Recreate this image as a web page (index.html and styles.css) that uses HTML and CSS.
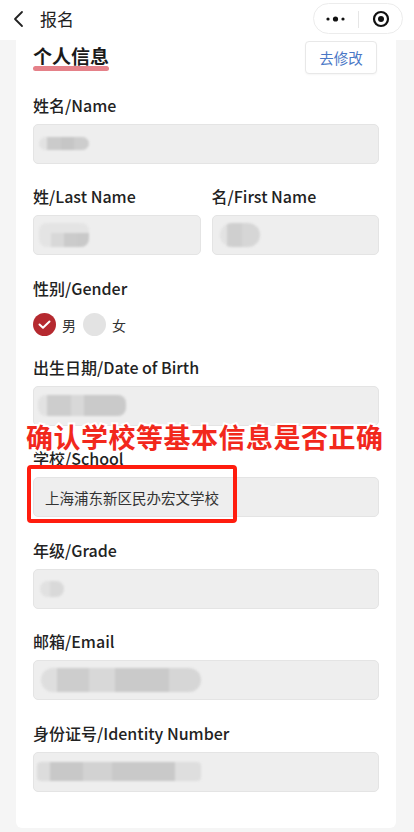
FILE: index.html
```html
<!DOCTYPE html>
<html lang="zh-CN">
<head>
<meta charset="utf-8">
<title>报名</title>
<link rel="stylesheet" href="styles.css">
</head>
<body>
<header class="topbar">
  <svg class="back" width="24" height="24" viewBox="0 0 24 24"><polyline points="15,5 8,12 15,19" fill="none" stroke="#222" stroke-width="1.8" stroke-linecap="round" stroke-linejoin="round"/></svg>
  <span class="page-title">报名</span>
  <div class="capsule">
    <svg width="88" height="29" viewBox="0 0 88 29">
      <circle cx="14" cy="15" r="1.6" fill="#111"/>
      <circle cx="21.5" cy="15" r="2.6" fill="#111"/>
      <circle cx="29" cy="15" r="1.6" fill="#111"/>
      <line x1="44.5" y1="7" x2="44.5" y2="24" stroke="#e6e6e6" stroke-width="1"/>
      <circle cx="67" cy="15" r="7" fill="none" stroke="#111" stroke-width="2.2"/>
      <circle cx="67" cy="15" r="3" fill="#111"/>
    </svg>
  </div>
</header>

<main class="card">
  <div class="card-head">
    <h2 class="section-title">个人信息</h2>
    <button class="edit-btn">去修改</button>
  </div>

  <div class="field">
    <div class="label">姓名/Name</div>
    <div class="input"><span class="mosaic m-name"></span></div>
  </div>

  <div class="field row">
    <div class="col">
      <div class="label">姓/Last Name</div>
      <div class="input"><span class="mosaic m-last"></span></div>
    </div>
    <div class="col">
      <div class="label">名/First Name</div>
      <div class="input"><span class="mosaic m-first"></span></div>
    </div>
  </div>

  <div class="field">
    <div class="label">性别/Gender</div>
    <div class="radios">
      <span class="radio checked">
        <svg width="23" height="23" viewBox="0 0 23 23"><polyline points="6.5,11.5 10,14.8 16.5,8.5" fill="none" stroke="#fff" stroke-width="2" stroke-linecap="round" stroke-linejoin="round"/></svg>
      </span>
      <span class="radio-text">男</span>
      <span class="radio"></span>
      <span class="radio-text">女</span>
    </div>
  </div>

  <div class="field field-tight">
    <div class="label">出生日期/Date of Birth</div>
    <div class="input"><span class="mosaic m-dob"></span></div>
  </div>

  <div class="field">
    <div class="label">学校/School</div>
    <div class="input"><span class="value">上海浦东新区民办宏文学校</span></div>
  </div>

  <div class="field">
    <div class="label">年级/Grade</div>
    <div class="input"><span class="mosaic m-grade"></span></div>
  </div>

  <div class="field">
    <div class="label">邮箱/Email</div>
    <div class="input"><span class="mosaic m-email"></span></div>
  </div>

  <div class="field">
    <div class="label">身份证号/Identity Number</div>
    <div class="input"><span class="mosaic m-id"></span></div>
  </div>
</main>

<div class="annotation">确认学校等基本信息是否正确</div>
<div class="highlight-box"></div>
</body>
</html>
```

FILE: styles.css
```css
* { box-sizing: border-box; }

html, body {
  margin: 0;
  padding: 0;
}

body {
  position: relative;
  width: 414px;
  height: 832px;
  overflow: hidden;
  background: #f5f5f5;
  font-family: "Noto Sans CJK SC", "Noto Sans", sans-serif;
  color: #222;
}

.topbar {
  height: 40px;
  background: #fff;
  display: flex;
  align-items: flex-start;
  padding-top: 3px;
  position: relative;
  z-index: 2;
}

.back {
  margin: 4px 0 0 7px;
  flex: none;
}

.page-title {
  margin-left: 9px;
  font-size: 17px;
  line-height: 31px;
  color: #222;
}

.capsule {
  margin-left: auto;
  margin-right: 11px;
  width: 90px;
  height: 31px;
  border: 1px solid #ececec;
  border-radius: 16px;
  background: #fff;
  display: flex;
}

.card {
  margin: 0 18px 0 16px;
  background: #fff;
  border-radius: 0 0 6px 6px;
  padding: 0 17px 36px 17px;
}

.card-head {
  display: flex;
  align-items: center;
  justify-content: space-between;
  height: 32px;
}

.section-title {
  position: relative;
  margin: 0;
  font-size: 19px;
  font-weight: 700;
  line-height: 26px;
  color: #1a1a1a;
  z-index: 0;
}

.section-title::after {
  content: "";
  position: absolute;
  left: 0;
  right: 0;
  bottom: -2px;
  height: 5px;
  border-radius: 3px;
  background: #e58189;
  z-index: -1;
}

.edit-btn {
  width: 72px;
  height: 33px;
  margin-right: 2px;
  margin-top: 2px;
  border: 1px solid #e8e8e8;
  border-radius: 4px;
  background: #fff;
  color: #4a78c6;
  font-family: inherit;
  font-size: 14.5px;
  padding: 0;
  box-shadow: 0 1px 2px rgba(0,0,0,0.04);
}

.field {
  margin-top: 23.5px;
}

.field-tight {
  margin-top: 21px;
}

.row {
  display: flex;
  gap: 11px;
}

.col {
  flex: 1;
  min-width: 0;
}

.label {
  font-size: 16px;
  line-height: 18px;
  font-weight: 500;
  color: #222;
  margin-bottom: 10px;
  white-space: nowrap;
}

.input {
  height: 40px;
  background: #eeeeee;
  border: 1px solid #e4e4e4;
  border-radius: 5px;
  display: flex;
  align-items: center;
  padding-left: 11px;
}

.value {
  font-size: 14.5px;
  color: #333;
}

.mosaic {
  display: block;
  border-radius: 8px;
  filter: blur(1.2px);
}

.m-name {
  margin-left: -6px;
  width: 50px;
  height: 13px;
  background: linear-gradient(90deg, #e2e2e2 0 16%, #cbcbcb 16% 44%, #c6c6c6 44% 70%, #cdcdcd 70% 100%);
}

.m-last {
  margin-left: -6px;
  width: 50px;
  height: 24px;
  background:
    linear-gradient(180deg, #e4e4e4 0 40%, transparent 40%),
    linear-gradient(90deg, #e4e4e4 0 24%, #d8d8d8 24% 50%, #cbcbcb 50% 76%, #c9c9c9 76% 100%);
}

.m-first {
  margin-left: -4px;
  width: 40px;
  height: 24px;
  border-radius: 12px;
  background: linear-gradient(90deg, #e2e2e2 0 18%, #cfcfcf 18% 55%, #d6d6d6 55% 100%);
}

.m-dob {
  margin-left: -7px;
  width: 88px;
  height: 21px;
  background: linear-gradient(90deg, #e2e2e2 0 10%, #cdcdcd 10% 38%, #d8d8d8 38% 52%, #cacaca 52% 100%);
}

.m-grade {
  margin-left: -5px;
  width: 24px;
  height: 16px;
  background: linear-gradient(90deg, #e1e1e1 0 40%, #d9d9d9 40% 100%);
}

.m-email {
  margin-left: -4px;
  width: 160px;
  height: 24px;
  border-radius: 12px;
  background: linear-gradient(90deg, #dedede 0 10%, #cdcdcd 10% 30%, #d8d8d8 30% 46%, #cacaca 46% 80%, #d6d6d6 80% 100%);
}

.m-id {
  margin-left: -8px;
  width: 164px;
  height: 19px;
  border-radius: 4px;
  background: linear-gradient(90deg, #dcdcdc 0 8%, #c8c8c8 8% 28%, #d2d2d2 28% 46%, #c9c9c9 46% 84%, #dedede 84% 100%);
}

.radios {
  margin-top: 16px;
  display: flex;
  align-items: center;
  height: 24px;
}

.radio {
  width: 23px;
  height: 23px;
  border-radius: 50%;
  background: #e3e3e3;
  display: flex;
  flex: none;
}

.radio.checked {
  background: #b5292f;
}

.radio-text {
  font-size: 14px;
  color: #333;
  margin: 0 7px 0 6px;
}

.annotation {
  position: absolute;
  left: 26px;
  top: 422px;
  font-size: 27px;
  line-height: 30px;
  font-weight: 700;
  letter-spacing: 0.5px;
  color: #f2281c;
  -webkit-text-stroke: 4px #fff;
  paint-order: stroke fill;
  white-space: nowrap;
  z-index: 3;
}

.highlight-box {
  position: absolute;
  left: 27px;
  top: 465px;
  width: 210px;
  height: 58px;
  border: 4px solid #ff1c0e;
  border-radius: 4px;
  z-index: 3;
}
```
